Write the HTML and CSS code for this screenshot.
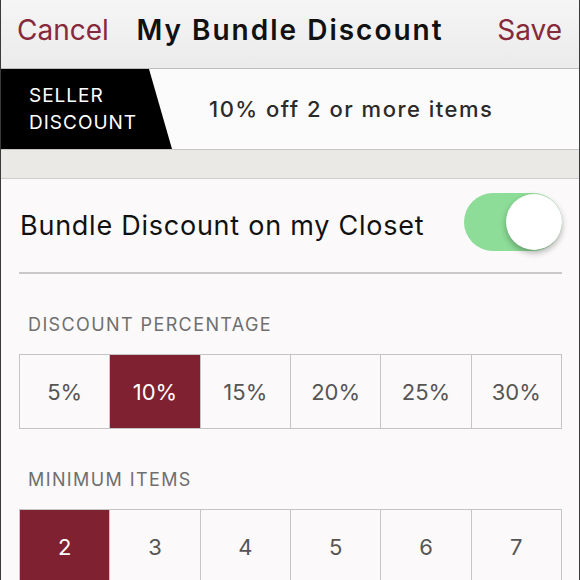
FILE: index.html
```html
<!DOCTYPE html>
<html lang="en">
<head>
    <meta charset="UTF-8">
    <meta name="viewport" content="width=device-width, initial-scale=1.0">
    <title>My Bundle Discount</title>
    <link rel="stylesheet" href="styles.css">
</head>
<body>
<div class="app">
    <div class="nav">
        <span class="nav-link">Cancel</span>
        <span class="nav-title">My Bundle Discount</span>
        <span class="nav-link">Save</span>
    </div>
    <div class="banner">
        <div class="banner-tag">SELLER<br>DISCOUNT</div>
        <div class="banner-text">10% off 2 or more items</div>
    </div>
    <div class="band"></div>
    <div class="content">
        <div class="toggle-row">
            <span class="toggle-label">Bundle Discount on my Closet</span>
            <div class="toggle on"><div class="knob"></div></div>
        </div>
        <div class="section-title">DISCOUNT PERCENTAGE</div>
        <div class="choices">
            <div class="choice">5%</div>
            <div class="choice selected">10%</div>
            <div class="choice">15%</div>
            <div class="choice">20%</div>
            <div class="choice">25%</div>
            <div class="choice">30%</div>
        </div>
        <div class="section-title">MINIMUM ITEMS</div>
        <div class="choices">
            <div class="choice selected">2</div>
            <div class="choice">3</div>
            <div class="choice">4</div>
            <div class="choice">5</div>
            <div class="choice">6</div>
            <div class="choice">7</div>
        </div>
    </div>
</div>
</body>
</html>
```
FILE: styles.css
```css
html, body {
    margin: 0;
    padding: 0;
    background-color: #fbf9f9;
}

body {
    font-family: Inter, Lato, sans-serif;
}

.app {
    width: 580px;
    height: 580px;
    overflow: hidden;
    box-sizing: border-box;
    border-left: 1px solid #3a3a3a;
    border-right: 1px solid #3a3a3a;
    background-color: #fbf9f9;
}

.nav {
    display: flex;
    align-items: center;
    justify-content: space-between;
    height: 69px;
    padding: 0 17px 8px 16px;
    box-sizing: border-box;
    background: linear-gradient(#f6f5f5, #ecebeb);
    border-bottom: 1px solid #bebcbc;
}

.nav-link {
    font-size: 28px;
    color: #86293a;
}

.nav-title {
    font-size: 28px;
    font-weight: 600;
    letter-spacing: 2px;
    color: #111;
    margin-right: 26px;
}

.banner {
    display: flex;
    align-items: center;
    height: 80px;
    background-color: #fcfbfb;
    border-bottom: 1px solid #c6c4c4;
}

.banner-tag {
    display: flex;
    align-items: center;
    align-self: stretch;
    width: 171px;
    padding-left: 28px;
    box-sizing: border-box;
    background-color: #000;
    color: #fff;
    font-size: 19px;
    letter-spacing: 1px;
    line-height: 27px;
    clip-path: polygon(0 0, 148px 0, 171px 100%, 0 100%);
}

.banner-text {
    margin-left: 37px;
    font-size: 22px;
    font-weight: 500;
    letter-spacing: 1.5px;
    color: #2a2a2a;
}

.band {
    height: 28px;
    background-color: #ebe9e5;
    border-bottom: 1px solid #cfcdcc;
}

.content {
    padding: 0 17px 0 18px;
}

.toggle-row {
    display: flex;
    align-items: center;
    justify-content: space-between;
    height: 93px;
    padding-left: 1px;
    border-bottom: 2px solid #cac8c8;
}

.toggle-label {
    font-size: 27px;
    letter-spacing: 0.75px;
    color: #111;
}

.toggle {
    position: relative;
    width: 98px;
    height: 58px;
    border-radius: 29px;
    background-color: #8ddd98;
    margin-top: -8px;
}

.knob {
    position: absolute;
    top: 1px;
    right: 0;
    width: 56px;
    height: 56px;
    border-radius: 50%;
    background-color: #fff;
    box-shadow: 0 3px 6px rgba(0, 0, 0, 0.3);
}

.section-title {
    padding: 39px 0 0 9px;
    height: 41px;
    line-height: 24px;
    font-size: 18px;
    letter-spacing: 1.4px;
    color: #6f6f6f;
}

.choices {
    display: grid;
    grid-template-columns: repeat(6, 1fr);
    border: 1px solid #c6c4c4;
    border-right: none;
}

.choice {
    display: flex;
    align-items: center;
    justify-content: center;
    height: 73px;
    border-right: 1px solid #c6c4c4;
    font-size: 22px;
    color: #555;
}

.choice.selected {
    background-color: #7f2130;
    color: #fff;
}
```
